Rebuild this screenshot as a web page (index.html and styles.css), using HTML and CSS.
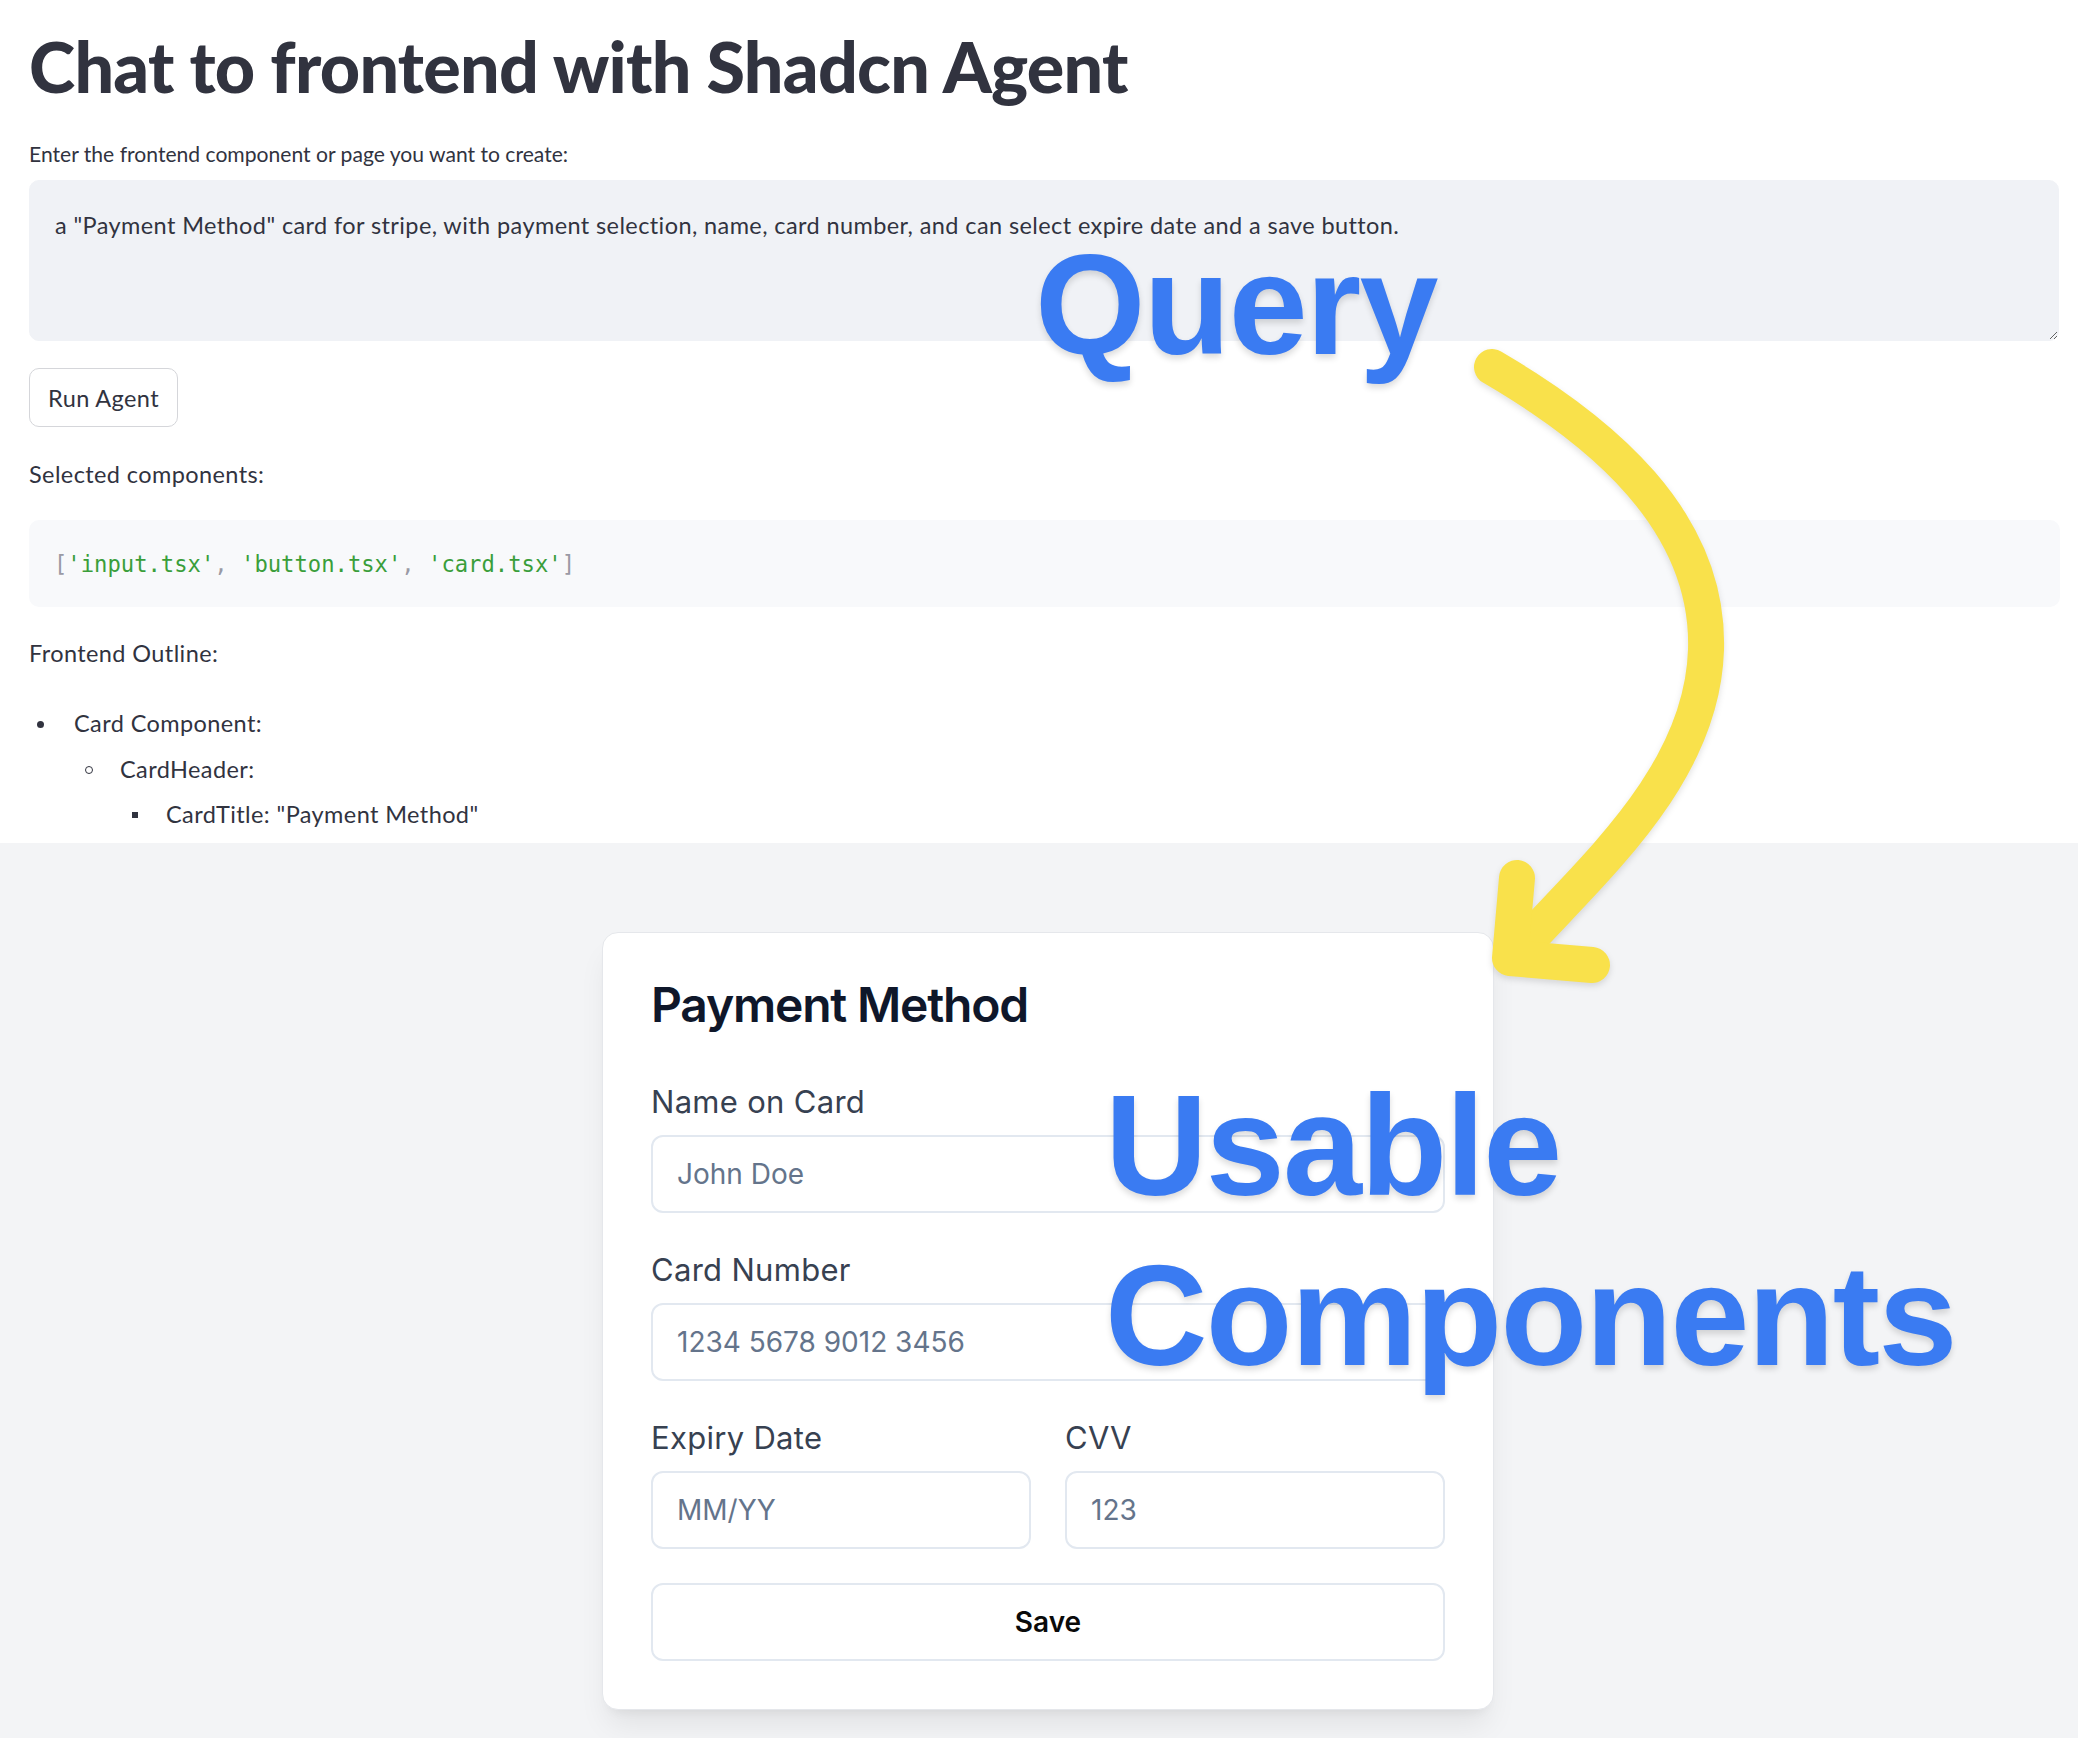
FILE: index.html
```html
<!DOCTYPE html>
<html lang="en">
<head>
<meta charset="utf-8">
<title>Chat to frontend with Shadcn Agent</title>
<link rel="stylesheet" href="styles.css">
</head>
<body>
<div class="page">
  <section class="app">
    <h1 class="title">Chat to frontend with Shadcn Agent</h1>
    <label class="widget-label" for="query">Enter the frontend component or page you want to create:</label>
    <textarea id="query" class="query-input" readonly>a "Payment Method" card for stripe, with payment selection, name, card number, and can select expire date and a save button.</textarea>
    <button class="run-btn" type="button">Run Agent</button>
    <p class="para">Selected components:</p>
    <pre class="code"><code><span class="p">[</span><span class="s">'input.tsx'</span><span class="p">, </span><span class="s">'button.tsx'</span><span class="p">, </span><span class="s">'card.tsx'</span><span class="p">]</span></code></pre>
    <p class="para outline-head">Frontend Outline:</p>
    <ul class="outline">
      <li class="item"><span class="mark disc"></span><span>Card Component:</span></li>
      <li class="item lvl2"><span class="mark circle"></span><span>CardHeader:</span></li>
      <li class="item lvl3"><span class="mark square"></span><span>CardTitle: "Payment Method"</span></li>
    </ul>
  </section>

  <section class="preview">
    <div class="card">
      <h2 class="card-title">Payment Method</h2>
      <div class="field first">
        <label class="f-label">Name on Card</label>
        <div class="f-input">John Doe</div>
      </div>
      <div class="field">
        <label class="f-label">Card Number</label>
        <div class="f-input">1234 5678 9012 3456</div>
      </div>
      <div class="row">
        <div class="field col">
          <label class="f-label">Expiry Date</label>
          <div class="f-input">MM/YY</div>
        </div>
        <div class="field col">
          <label class="f-label">CVV</label>
          <div class="f-input">123</div>
        </div>
      </div>
      <button class="save-btn" type="button">Save</button>
    </div>
  </section>

  <div class="note note-query">Query</div>
  <div class="note note-usable">Usable<br>Components</div>
  <svg class="arrow" width="2078" height="1738" viewBox="0 0 2078 1738" xmlns="http://www.w3.org/2000/svg">
    <path d="M1492 367 C 1600 430, 1710 520, 1706 650 C 1702 780, 1585 875, 1512 958" />
    <path d="M1517 878 L1510 958 L1592 965" />
  </svg>
</div>
</body>
</html>
```

FILE: styles.css
```css
html, body {
  margin: 0;
  padding: 0;
}
body {
  background: #f3f4f6;
  width: 2078px;
  height: 1738px;
  overflow: hidden;
}
.page {
  position: relative;
  width: 2078px;
  height: 1738px;
}

/* ---------- Streamlit-like app section ---------- */
.app {
  background: #ffffff;
  padding: 26px 19px 12px 29px;
  height: 843px;
  box-sizing: border-box;
  font-family: Lato, "Liberation Sans", sans-serif;
  color: #31333f;
  display: flex;
  flex-direction: column;
  align-items: flex-start;
}
.title {
  margin: 0;
  font-size: 70px;
  line-height: 80px;
  font-weight: 900;
  letter-spacing: -0.75px;
  color: #31333f;
}
.widget-label {
  margin-top: 34px;
  font-size: 21.1px;
  line-height: 28px;
  letter-spacing: 0;
}
.query-input {
  margin-top: 12px;
  width: 2030px;
  height: 161px;
  box-sizing: border-box;
  border: 1px solid #f0f2f6;
  border-radius: 10px;
  background: #f0f2f6;
  padding: 27px 25px;
  font-family: Lato, "Liberation Sans", sans-serif;
  font-size: 23.5px;
  line-height: 34px;
  letter-spacing: 0.4px;
  color: #31333f;
  outline: none;
  resize: vertical;
}
.run-btn {
  margin-top: 27px;
  height: 59px;
  padding: 0 18px;
  background: #ffffff;
  border: 1.5px solid #d5d6da;
  border-radius: 10px;
  font-family: Lato, "Liberation Sans", sans-serif;
  font-size: 23.5px;
  color: #31333f;
  letter-spacing: 0.4px;
  display: flex;
  align-items: center;
}
.para {
  margin: 30px 0 0;
  font-size: 23.5px;
  line-height: 34px;
  letter-spacing: 0.4px;
}
.code {
  margin: 29px 0 0;
  width: 2031px;
  height: 87px;
  box-sizing: border-box;
  background: #f8f9fb;
  border-radius: 10px;
  padding: 0 25px;
  display: flex;
  align-items: center;
  font-family: "Liberation Mono", "DejaVu Sans Mono", monospace;
  font-size: 22.2px;
  line-height: 30px;
}
.code .p { color: #9a9aa5; }
.code .s { color: #3a9e3a; }
.outline-head {
  margin-top: 29px;
}
.outline {
  list-style: none;
  margin: 36px 0 0;
  padding: 0;
  display: flex;
  flex-direction: column;
  gap: 11.5px;
}
.item {
  display: flex;
  align-items: center;
  font-size: 23.5px;
  line-height: 34px;
  letter-spacing: 0.4px;
}
.item.lvl2 { padding-left: 46px; }
.item.lvl3 { padding-left: 92px; }
.mark {
  width: 45px;
  height: 34px;
  flex: none;
  display: flex;
  align-items: center;
  padding-left: 8px;
  box-sizing: border-box;
}
.mark::before {
  content: "";
  display: block;
  margin-top: 2px;
}
.mark.disc::before {
  width: 7px; height: 7px;
  border-radius: 50%;
  background: #31333f;
}
.mark.circle { padding-left: 10px; }
.mark.circle::before {
  width: 6px; height: 6px;
  border-radius: 50%;
  border: 1.2px solid #31333f;
}
.mark.square { padding-left: 11px; }
.mark.square::before {
  width: 6px; height: 6px;
  background: #31333f;
}

/* ---------- Rendered component preview ---------- */
.preview {
  height: 895px;
  box-sizing: border-box;
  padding-top: 89px;
  padding-left: 18px;
  display: flex;
  justify-content: center;
  align-items: flex-start;
  font-family: Inter, "Liberation Sans", sans-serif;
}
.card {
  width: 892px;
  box-sizing: border-box;
  background: #ffffff;
  border: 1px solid #e5e7eb;
  border-radius: 16px;
  padding: 48px 48px 48px;
  box-shadow: 0 20px 30px -6px rgba(0,0,0,0.08), 0 8px 12px -8px rgba(0,0,0,0.08);
  display: flex;
  flex-direction: column;
}
.card-title {
  margin: 0;
  font-size: 48px;
  line-height: 48px;
  font-weight: 600;
  letter-spacing: -1.2px;
  color: #0f172a;
}
.field {
  display: flex;
  flex-direction: column;
  gap: 18px;
  margin-top: 41px;
}
.field.first { margin-top: 57px; }
.f-label {
  font-size: 31px;
  line-height: 31px;
  letter-spacing: 0.3px;
  color: #374151;
}
.f-input {
  height: 78px;
  box-sizing: border-box;
  border: 2px solid #e2e8f0;
  border-radius: 12px;
  padding: 0 24px;
  display: flex;
  align-items: center;
  font-size: 28px;
  color: #64748b;
  background: #ffffff;
}
.row {
  display: grid;
  grid-template-columns: 1fr 1fr;
  gap: 34px;
  margin-top: 41px;
}
.row .field { margin-top: 0; }
.save-btn {
  margin-top: 34px;
  height: 78px;
  background: #ffffff;
  border: 2px solid #e2e8f0;
  border-radius: 12px;
  font-family: Inter, "Liberation Sans", sans-serif;
  font-size: 28px;
  font-weight: 600;
  color: #0a0a0a;
}

/* ---------- Annotation overlays ---------- */
.note {
  position: absolute;
  font-family: "Liberation Sans", Arial, sans-serif;
  font-weight: 700;
  font-size: 142px;
  letter-spacing: -0.012em;
  color: #3a7bf2;
  text-shadow: 0 4px 6px rgba(0,0,0,0.14);
  white-space: nowrap;
}
.note-query {
  left: 1035px;
  top: 234px;
  line-height: 142px;
}
.note-usable {
  left: 1105px;
  top: 1061px;
  line-height: 170px;
}
.arrow {
  position: absolute;
  left: 0;
  top: 0;
  pointer-events: none;
  filter: drop-shadow(0 3px 3px rgba(0,0,0,0.12));
}
.arrow path {
  fill: none;
  stroke: #f9e14b;
  stroke-width: 36;
  stroke-linecap: round;
  stroke-linejoin: round;
}
```
